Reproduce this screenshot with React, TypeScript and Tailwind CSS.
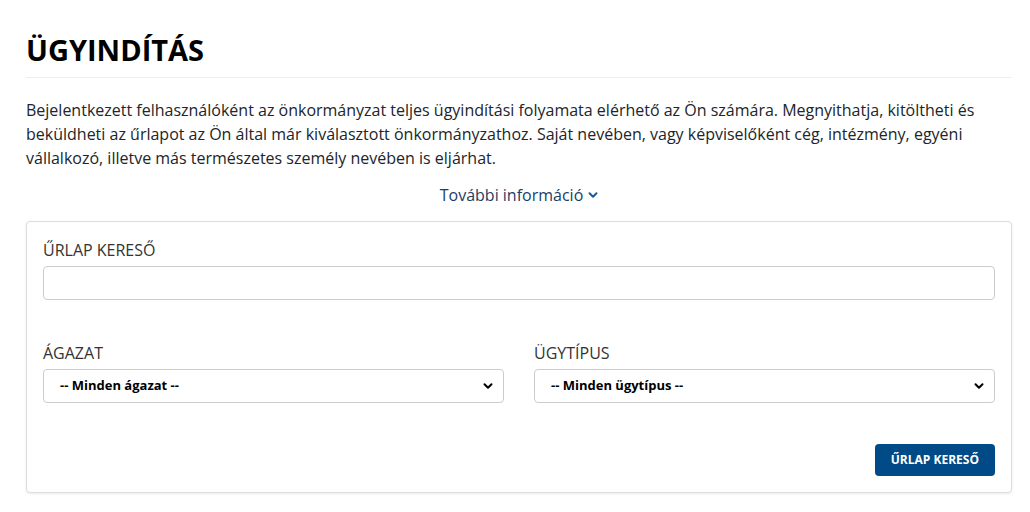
import React from "react";

function Chevron({ className }: { className?: string }) {
  return (
    <svg width="10" height="10" viewBox="0 0 10 10" fill="none" className={className} aria-hidden="true">
      <path d="M1.5 3.2L5 6.7L8.5 3.2" stroke="currentColor" strokeWidth="2" strokeLinecap="round" strokeLinejoin="round" />
    </svg>
  );
}

function SelectBox({ label, value }: { label: string; value: string }) {
  return (
    <div className="flex flex-col">
      <label className="mb-[4px] text-[16px] leading-[24px] text-[#333]">{label}</label>
      <div className="flex h-[34px] items-center justify-between rounded-[4px] border border-[#ccc] bg-white pl-[16px] pr-[10px]">
        <span className="text-[13px] font-bold text-black">{value}</span>
        <Chevron className="text-black" />
      </div>
    </div>
  );
}

export default function App() {
  return (
    <div className="min-h-[512px] bg-white pl-[26px] pt-[30px] font-['Open_Sans',sans-serif] text-[#212529]">
      <div className="w-[986px]">
        <h1 className="pb-[7px] text-[29px] font-bold leading-[40px] text-black">ÜGYINDÍTÁS</h1>
        <div className="h-px bg-[#eee]" />
        <p className="mt-[20px] text-[16px] leading-[24px]">
          Bejelentkezett felhasználóként az önkormányzat teljes ügyindítási folyamata elérhető az Ön számára. Megnyithatja, kitöltheti és beküldheti az űrlapot az Ön által már kiválasztott önkormányzathoz. Saját nevében, vagy képviselőként cég, intézmény, egyéni vállalkozó, illetve más természetes személy nevében is eljárhat.
        </p>
        <div className="mt-[13px] flex items-center justify-center gap-[5px] text-[16px] leading-[24px] text-[#1c3d66]">
          <span>További információ</span>
          <Chevron className="text-[#1a5a9a]" />
        </div>
        <div className="mt-[14px] rounded-[4px] border border-[#ddd] bg-white px-[16px] pb-[16px] pt-[16px] shadow-[0_1px_3px_rgba(0,0,0,0.08)]">
          <label className="block text-[16px] leading-[24px] text-[#333]">ŰRLAP KERESŐ</label>
          <div className="mt-[4px] h-[34px] rounded-[4px] border border-[#ccc] bg-white" />
          <div className="mt-[41px] grid grid-cols-2 gap-[30px]">
            <SelectBox label="ÁGAZAT" value="-- Minden ágazat --" />
            <SelectBox label="ÜGYTÍPUS" value="-- Minden ügytípus --" />
          </div>
          <div className="mt-[41px] flex justify-end">
            <button className="h-[32px] rounded-[4px] bg-[#004a87] px-[16px] text-[12px] font-bold text-white">
              ŰRLAP KERESŐ
            </button>
          </div>
        </div>
      </div>
    </div>
  );
}
